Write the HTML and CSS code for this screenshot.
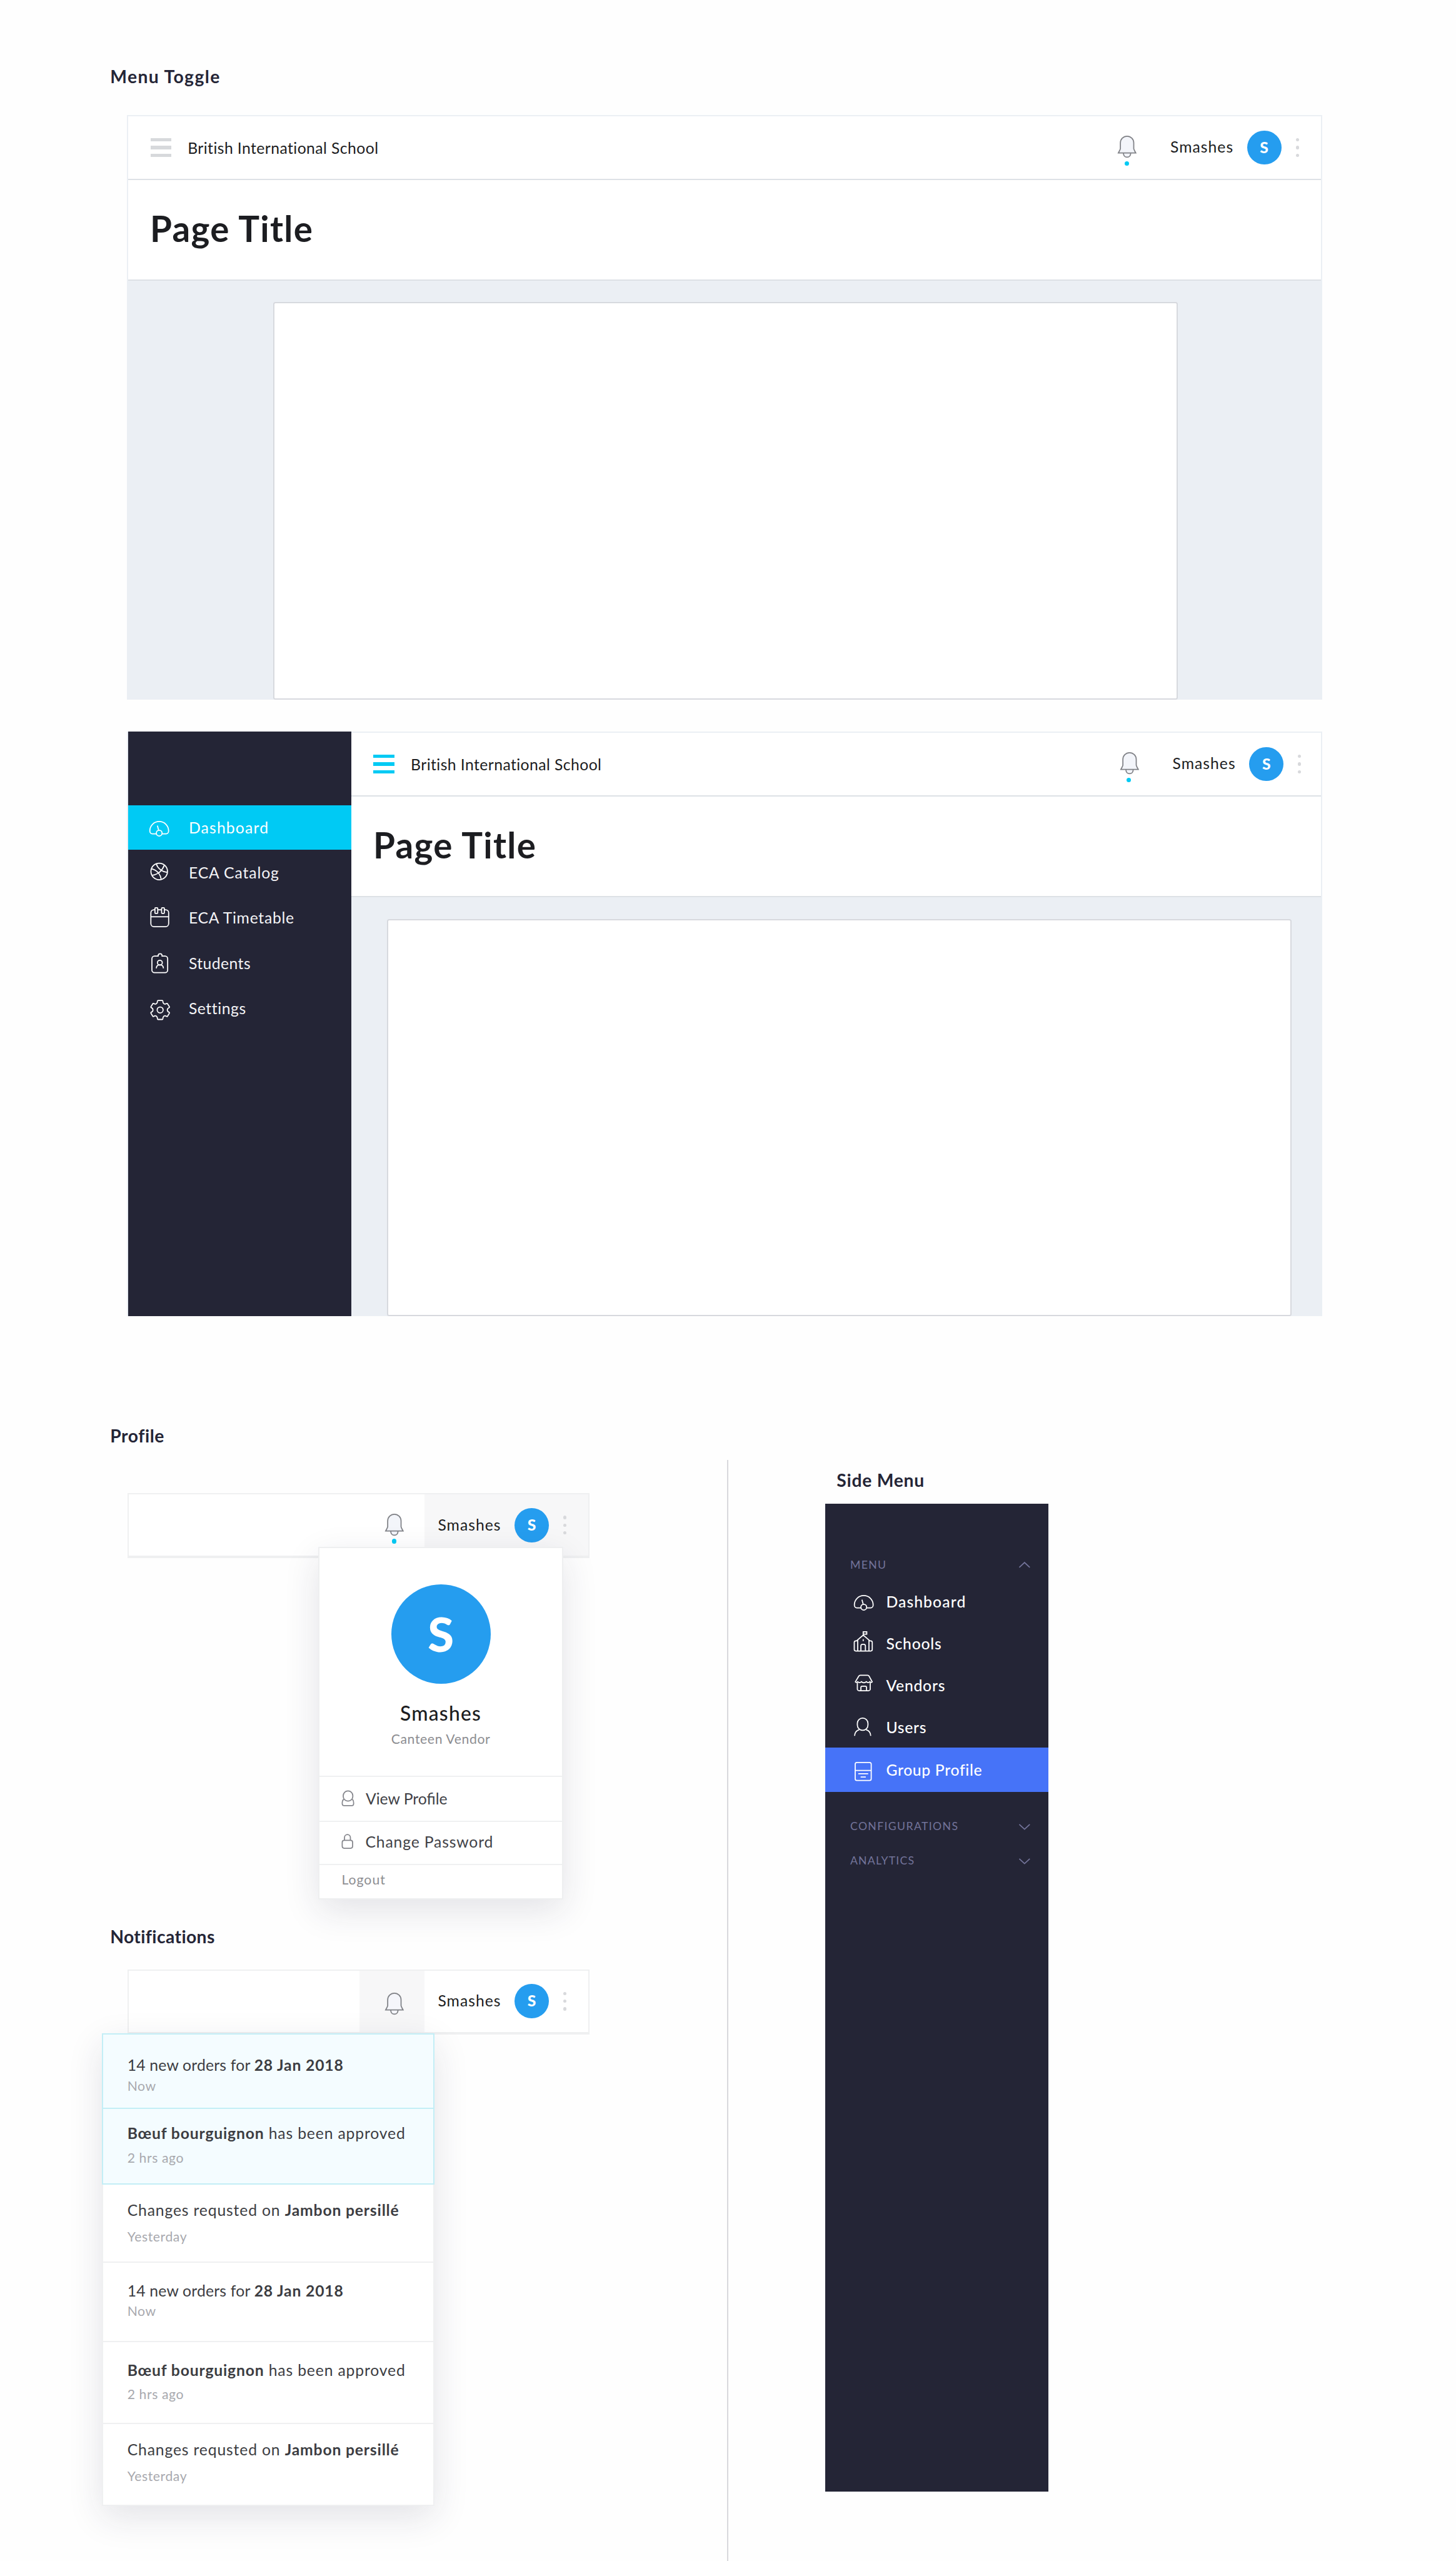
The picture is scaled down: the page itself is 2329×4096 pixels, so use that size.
FILE: index.html
```html
<!DOCTYPE html>
<html lang="en">
<head>
<meta charset="utf-8">
<title>Navigation components</title>
<link rel="stylesheet" href="styles.css">
</head>
<body>
<svg class="sprite" aria-hidden="true">
  <symbol id="bell" viewBox="0 0 34 40">
    <path d="M10.2 31.3C10.2 36 13 39 16.8 39S23.4 36 23.4 31.3"/>
    <path d="M4.7 23.6V13A12.1 12.1 0 0 1 28.9 13V23.6C29.6 26.4 31.4 28.8 32.6 31.3H1C2.200 28.800 4 26.400 4.700 23.600Z"/>
  </symbol>
  <symbol id="gauge" viewBox="0 0 40 40">
    <path d="M14.600 31.300H7.500C5 31.300 3 29 3 26C3 16.500 10.500 9 20 9S37 16.500 37 26C37 29 35 31.300 32.500 31.300H25.400"/>
    <circle cx="20" cy="30" r="5.200"/>
    <path d="M16.700 16.400L19 24.600"/>
  </symbol>
  <symbol id="ball" viewBox="0 0 40 40">
    <circle cx="20" cy="19" r="15"/>
    <path d="M5.700 14C15 16 22 23 23.700 33.600M14.700 5C17 13 25 20 34.800 20.400M29.400 7.200C26 17 18 25 6.800 26"/>
  </symbol>
  <symbol id="calendar" viewBox="0 0 40 40">
    <rect x="4.900" y="5.700" width="32.200" height="30.600" rx="5.500"/>
    <path d="M5 18.400H37"/>
    <rect class="solid" x="12.300" y="2" width="5" height="10.200" rx="1"/>
    <rect class="solid" x="24.300" y="2" width="5" height="10.200" rx="1"/>
  </symbol>
  <symbol id="badge" viewBox="0 0 40 40">
    <path d="M18 8H11.500A4.800 4.800 0 0 0 6.800 12.800V33.400A4.800 4.800 0 0 0 11.500 38.200H30.600A4.800 4.800 0 0 0 35.300 33.400V12.800A4.800 4.800 0 0 0 30.600 8H25.200C25.200 2.600 18 2.600 18 8Z"/>
    <circle cx="21.200" cy="20" r="4.400"/>
    <path d="M14.800 30.400C14.800 26 17.500 23.800 21.200 23.800S27.600 26 27.600 30.400"/>
  </symbol>
  <symbol id="gear" viewBox="0 0 40 40">
    <g transform="translate(21.700 23)">
      <path d="M-4-17.200H4C5.500-17.200 4.600-14.500 5.500-13C7-10 9.500-10.200 11.500-11.600Q12.600-12.400 13.400-11.200L16.600-6Q17.200-4.600 16-4.100C12-2.500 12 2.500 16 4.100Q17.200 4.600 16.600 6L13.400 11.200Q12.600 12.400 11.500 11.600C9.500 10.200 7 10 5.500 13C4.600 14.500 5.500 17.200 4 17.200H-4C-5.500 17.200-4.600 14.500-5.500 13C-7 10-9.500 10.200-11.500 11.600Q-12.600 12.400-13.400 11.200L-16.600 6Q-17.200 4.600-16 4.100C-12 2.500-12-2.500-16-4.100Q-17.200-4.600-16.600-6L-13.400-11.200Q-12.600-12.400-11.500-11.600C-9.500-10.200-7-10-5.500-13C-4.600-14.500-5.500-17.200-4-17.200Z"/>
      <circle r="5.400"/>
    </g>
  </symbol>
  <symbol id="school" viewBox="0 0 40 40">
    <path d="M9 34.600H5.500A2.800 2.800 0 0 1 2.800 31.800V19A2.800 2.800 0 0 1 5.500 16.200H6.800L19 5.800L31.200 16.200H32.700A2.800 2.800 0 0 1 35.400 19V31.800A2.800 2.800 0 0 1 32.700 34.600ZM9 15V34.600M29.400 15V34.600M14.800 34.600V25.500A3 3 0 0 1 17.800 22.500H20A3 3 0 0 1 23 25.500V34.600M19 13.400V16.600M19 5.800V-.200H25.400V4.200H19"/>
  </symbol>
  <symbol id="store" viewBox="0 0 40 40">
    <path d="M4.800 14.600L11 4.200Q12 2.600 13.600 2.600H27Q28.600 2.600 29.600 4.200L35.300 14.600Q33 16.800 31.200 14.400Q28 17.800 24.700 14.400Q20 18 15.800 14.400Q12.300 17.800 9 14.400Q7 16.800 4.800 14.600Z"/>
    <path d="M8.400 16.200V27.600A3 3 0 0 0 11.400 30.600H28.700A3 3 0 0 0 31.700 27.600V16.200M14.800 30.600V24.800A2.400 2.400 0 0 1 17.200 22.400H22.600A2.400 2.400 0 0 1 25 24.800V30.600"/>
  </symbol>
  <symbol id="person" viewBox="0 0 40 40">
    <rect x="8.400" y="4.500" width="19.200" height="22" rx="9.400"/>
    <path d="M3.400 36.600C3.600 30.500 7 26.600 12 25.300M32.600 36.600C32.400 30.500 29 26.600 24 25.300"/>
  </symbol>
  <symbol id="card" viewBox="0 0 40 40">
    <rect x="4.500" y="6.700" width="29" height="32.400" rx="3"/>
    <path d="M4.500 21H33.500M10 27H28M14.300 33H23.700"/>
  </symbol>
  <symbol id="user" viewBox="0 0 24 30">
    <rect x="3.400" y="1.500" width="17.400" height="18.400" rx="8.600"/>
    <path d="M4.200 16.600C2.200 18.400 1.600 20.500 1.600 24Q1.600 28.200 5 28.200H19Q22.300 28.200 22.300 24C22.300 20.500 21.800 18.400 20 16.600"/>
  </symbol>
  <symbol id="lock" viewBox="0 0 24 30">
    <rect x="1.600" y="13" width="18.800" height="14.200" rx="3.600"/>
    <path d="M5.700 13V7.800A5.350 5.350 0 0 1 16.400 7.800V13"/>
  </symbol>
  <symbol id="chevron" viewBox="0 0 20 11">
    <path d="M.500 1L10 9.800L19.500 1"/>
  </symbol>
</svg>

<div class="board">
  <h2 class="heading heading-toggle">Menu Toggle</h2>

  <section class="frame">
    <div class="main">
      <header class="topbar">
        <span class="burger"><i></i><i></i><i></i></span>
        <span class="school">British International School</span>
        <span class="alerts"><svg class="bell"><use href="#bell"/></svg><i class="dot"></i></span>
        <span class="name">Smashes</span>
        <span class="avatar">S</span>
        <span class="more"><i></i><i></i><i></i></span>
      </header>
      <div class="title"><h1>Page Title</h1></div>
      <div class="canvas"><div class="sheet"></div></div>
    </div>
  </section>

  <section class="frame frame-open">
    <nav class="side">
      <a class="item active"><svg class="icon"><use href="#gauge"/></svg><span class="t45">Dashboard</span></a>
      <a class="item"><svg class="icon"><use href="#ball"/></svg><span class="t35">ECA Catalog</span></a>
      <a class="item"><svg class="icon"><use href="#calendar"/></svg><span class="t27">ECA Timetable</span></a>
      <a class="item"><svg class="icon"><use href="#badge"/></svg><span class="t16">Students</span></a>
      <a class="item"><svg class="icon"><use href="#gear"/></svg><span class="t21">Settings</span></a>
    </nav>
    <div class="main">
      <header class="topbar">
        <span class="burger"><i></i><i></i><i></i></span>
        <span class="school">British International School</span>
        <span class="alerts"><svg class="bell"><use href="#bell"/></svg><i class="dot"></i></span>
        <span class="name">Smashes</span>
        <span class="avatar">S</span>
        <span class="more"><i></i><i></i><i></i></span>
      </header>
      <div class="title"><h1>Page Title</h1></div>
      <div class="canvas"><div class="sheet"></div></div>
    </div>
  </section>

  <div class="lower">
    <div class="left">
      <h2 class="heading heading-profile">Profile</h2>
      <div class="bar bar-profile">
        <div class="cell cell-bell"><span class="alerts"><svg class="bell"><use href="#bell"/></svg><i class="dot"></i></span></div>
        <div class="cell cell-user on">
          <span class="name">Smashes</span>
          <span class="avatar">S</span>
          <span class="more"><i></i><i></i><i></i></span>
        </div>
        <div class="popup">
          <div class="who">
            <span class="portrait">S</span>
            <span class="who-name">Smashes</span>
            <span class="who-role">Canteen Vendor</span>
          </div>
          <a class="row row-view"><svg class="mini"><use href="#user"/></svg><span>View Profile</span></a>
          <a class="row row-pass"><svg class="mini"><use href="#lock"/></svg><span class="t34">Change Password</span></a>
          <a class="row row-out"><span class="t45">Logout</span></a>
        </div>
      </div>

      <h2 class="heading heading-notes">Notifications</h2>
      <div class="bar bar-notes">
        <div class="cell cell-bell on"><span class="alerts"><svg class="bell"><use href="#bell"/></svg></span></div>
        <div class="cell cell-user">
          <span class="name">Smashes</span>
          <span class="avatar">S</span>
          <span class="more"><i></i><i></i><i></i></span>
        </div>
        <div class="notes">
          <div class="note fresh n1"><p class="orders">14 new orders for <b>28 Jan 2018</b></p><small>Now</small></div>
          <div class="note fresh n2"><p><b>Bœuf bourguignon</b> has been approved</p><small>2 hrs ago</small></div>
          <div class="note n3"><p>Changes requsted on <b>Jambon persillé</b></p><small>Yesterday</small></div>
          <div class="note n4"><p class="orders">14 new orders for <b>28 Jan 2018</b></p><small>Now</small></div>
          <div class="note n5"><p><b>Bœuf bourguignon</b> has been approved</p><small>2 hrs ago</small></div>
          <div class="note n6"><p>Changes requsted on <b>Jambon persillé</b></p><small>Yesterday</small></div>
        </div>
      </div>
    </div>

    <div class="rule"></div>

    <div class="right">
      <h2 class="heading heading-side">Side Menu</h2>
      <nav class="panel">
        <div class="group group-menu"><span>MENU</span><svg class="chevron up"><use href="#chevron"/></svg></div>
        <a class="link"><svg class="icon"><use href="#gauge"/></svg><span class="t45">Dashboard</span></a>
        <a class="link"><svg class="icon"><use href="#school"/></svg><span class="t34">Schools</span></a>
        <a class="link"><svg class="icon"><use href="#store"/></svg><span class="t34">Vendors</span></a>
        <a class="link"><svg class="icon"><use href="#person"/></svg><span class="t21">Users</span></a>
        <a class="link current"><svg class="icon"><use href="#card"/></svg><span class="t27">Group Profile</span></a>
        <div class="group group-config"><span>CONFIGURATIONS</span><svg class="chevron"><use href="#chevron"/></svg></div>
        <div class="group group-stats"><span>ANALYTICS</span><svg class="chevron"><use href="#chevron"/></svg></div>
      </nav>
    </div>
  </div>
</div>
</body>
</html>
```

FILE: styles.css
```css
* { box-sizing: border-box; margin: 0; padding: 0; }

html { font-size: 8.8353px; }

body {
  background: #fefefe;
  font-family: Lato, "Liberation Sans", sans-serif;
  font-size: 2.8rem;
  line-height: 4rem;
  color: #1c1d21;
}

.sprite { position: absolute; width: 0; height: 0; }

svg { flex: none; display: block; overflow: visible; fill: none; stroke: currentColor; stroke-width: 2; }
symbol { overflow: visible; }
.solid { fill: #242536; }

.board { width: 263.6rem; height: 463.6rem; overflow: hidden; display: flex; flex-direction: column; }

/* letter spacing steps */
.t16 { letter-spacing: .018em; }
.t21 { letter-spacing: .023em; }
.t27 { letter-spacing: .029em; }
.t34 { letter-spacing: .034em; }
.t35 { letter-spacing: .036em; }
.t45 { letter-spacing: .047em; }

.heading { font-size: 3.2rem; line-height: 4rem; font-weight: 700; color: #242536; white-space: nowrap; }
.heading-toggle { margin: 11.9rem 0 0 19.95rem; letter-spacing: .05em; }
.heading-profile { margin: 19.7rem 0 0 19.95rem; letter-spacing: .02em; }
.heading-notes { margin: 66.5rem 0 0 19.95rem; letter-spacing: .014em; }
.heading-side { margin: 27.75rem 0 0 19.65rem; letter-spacing: .026em; }

/* page frames */
.frame { width: 216.4rem; height: 105.8rem; margin: 4.9rem 0 0 23rem; flex: none; display: flex; border: solid #ebeff4; border-width: 0 2px; }
.frame-open { margin-top: 5.8rem; }
.main { flex: 1; display: flex; flex-direction: column; border-top: 2px solid #ebeff4; background: #fff; }

.topbar { height: 11.6rem; display: flex; align-items: center; padding: 0 4rem; border-bottom: 2px solid #dde1e6; }
.frame-open .topbar { padding-right: 3.6rem; }
.burger { width: 3.8rem; display: grid; gap: .8rem; margin-right: 2.95rem; color: #d7d9dc; }
.burger i { height: .6rem; background: currentColor; }
.frame-open .burger { color: #00caf4; }
.school { flex: 1; letter-spacing: .0174em; white-space: nowrap; padding-top: .1rem; }

.alerts { position: relative; width: 3.4rem; height: 4rem; margin-bottom: .2rem; }
.bell { width: 3.4rem; height: 4rem; color: #808287; fill: #f3f5fa; }
.dot { position: absolute; left: 1.2rem; top: 4.6rem; width: .8rem; height: .8rem; border-radius: 50%; background: #00caf4; }
.name { width: 11.5rem; margin: 0 2.4rem .25rem 6.1rem; letter-spacing: .041em; white-space: nowrap; }
.avatar { width: 6.2rem; height: 6.2rem; border-radius: 50%; background: #259def; color: #fff; font-weight: 900; line-height: 6.2rem; text-align: center; }
.more { margin-left: 2.6rem; display: grid; gap: .8rem; }
.more i { width: .6rem; height: .6rem; border-radius: 50%; background: #d8d9dc; }

.title { height: 18.2rem; display: flex; align-items: center; padding: 0 0 .46rem 3.95rem; border-bottom: 2px solid #dde1e6; }
h1 { font-size: 6.4rem; line-height: 8rem; font-weight: 700; letter-spacing: .024em; }
.canvas { flex: 1; display: flex; padding: 3.8rem 0 0 26.2rem; background: #ebeff4; }
.sheet { width: 163.8rem; background: #fff; border: 2px solid #d7d9de; border-radius: .4rem; }
.frame-open .canvas { padding: 4rem 0 0 6.4rem; }

/* open side navigation */
.side { width: 40.4rem; padding-top: 13.4rem; background: #242536; }
.item { height: 8.2rem; display: flex; align-items: center; gap: 3.35rem; padding-left: 3.6rem; color: #f4f4f6; }
.item span { padding-top: .15rem; }
.item.active { height: 8rem; background: #00caf4; color: #fff; }
.item:last-child span { padding-top: 0; }
.icon { width: 4rem; height: 4rem; color: #fff; }

/* lower half */
.lower { flex: 1; display: flex; }
.left { width: 131.6rem; }
.rule { width: 2px; margin-top: 26.1rem; background: #d8d8dc; }

.bar { position: relative; width: 83.6rem; height: 11.77rem; margin-left: 23.1rem; display: flex; justify-content: flex-end; border: 2px solid #eff0f1; border-bottom-width: 4px; background: #fff; }
.bar-profile { margin-top: 8.43rem; }
.bar-notes { margin-top: 3.9rem; }
.cell { display: flex; align-items: center; }
.cell.on { background: #f7f7f8; }
.cell-bell { width: 11.8rem; padding-left: 4.7rem; }
.cell-user { width: 29.65rem; padding-left: 2.45rem; }
.cell .name { margin-left: 0; }
.bar-notes .alerts { margin: 1rem 0 0; }
.bar-notes .bell { fill: #f5f6fb; }

.popup { position: absolute; left: 34.3rem; top: 9.47rem; width: 44.35rem; height: 63.8rem; background: #fff; border: 2px solid #eeeff0; box-shadow: 0 2rem 6rem rgba(36, 37, 64, .12); }
.who { height: 41.4rem; display: flex; flex-direction: column; align-items: center; padding-top: 6.6rem; border-bottom: 2px solid #eff0f1; }
.portrait { width: 18rem; height: 18rem; border-radius: 50%; background: #259def; color: #fff; font-size: 8.6rem; font-weight: 900; line-height: 17.8rem; text-align: center; }
.who-name { margin-top: 3.1rem; font-size: 3.6rem; line-height: 4.4rem; font-weight: 500; letter-spacing: .04em; }
.who-role { margin-top: .93rem; font-size: 2.4rem; line-height: 3rem; letter-spacing: .029em; color: #8c8d91; }
.row { display: flex; align-items: center; gap: 1.95rem; padding-left: 4rem; color: #414247; }
.row-view { height: 8.2rem; padding-bottom: .1rem; border-bottom: 2px solid #eff0f1; }
.row-pass { height: 7.8rem; padding-bottom: .5rem; border-bottom: 2px solid #eff0f1; gap: 1.9rem; }
.row-out { height: 6rem; padding-bottom: .6rem; font-size: 2.4rem; color: #8c8d91; }
.mini { width: 2.4rem; height: 3rem; color: #85868c; }

.notes { position: absolute; left: -4.9rem; top: 11.3rem; width: 60.2rem; background: #fff; box-shadow: 0 2rem 6rem rgba(36, 37, 64, .12); }
.note { padding-left: 4.4rem; border: 2px solid #eff0f1; border-top: 0; color: #3c3d42; white-space: nowrap; }
.note p { line-height: 3.6rem; letter-spacing: .034em; }
.note b { font-weight: 700; letter-spacing: .033em; }
.note .orders { letter-spacing: .008em; }
.note small { display: block; font-size: 2.4rem; line-height: 3rem; letter-spacing: .027em; color: #a8a9ae; }
.fresh { background: #f4fcff; border-color: #c3eef6; }
.n1 { height: 13.8rem; padding-top: 3.77rem; border-top: 2px solid #c3eef6; }
.n1 small { margin-top: .45rem; }
.n2 { height: 13.6rem; padding-top: 2.59rem; }
.n2 small { margin-top: 1.08rem; }
.n3 { height: 14.2rem; padding-top: 2.82rem; }
.n3 small { margin-top: 1.5rem; }
.n4 { height: 14.4rem; padding-top: 3.22rem; }
.n4 small { margin-top: .4rem; }
.n5 { height: 14.8rem; padding-top: 3.2rem; }
.n5 small { margin-top: 1.09rem; }
.n6 { height: 14.8rem; padding-top: 2.85rem; }
.n6 small { margin-top: 1.5rem; }

/* collapsible side menu */
.panel { width: 40.4rem; height: 178.8rem; margin: 2.25rem 0 0 17.6rem; padding-top: 9.58rem; background: #242536; color: #fff; }
.group { height: 3rem; display: flex; align-items: center; justify-content: space-between; padding: 0 3.3rem 0 4.5rem; font-size: 2rem; line-height: 3rem; letter-spacing: .077em; color: #73749a; }
.group-menu { margin-bottom: 1.32rem; }
.group-config { margin-top: 4.78rem; }
.group-stats { margin-top: 3.23rem; letter-spacing: .067em; }
.chevron { width: 2rem; height: 1.1rem; }
.up { transform: scaleY(-1); }
.link { height: 7.575rem; display: flex; align-items: center; gap: 2rem; padding-left: 5rem; }
.link span { padding-top: .2rem; font-weight: 500; letter-spacing: .03em; }
.link .t45 { letter-spacing: .044em; }
.link.current { height: 8rem; background: #4673f8; }
.link.current span { padding-top: 0; letter-spacing: .027em; }
```
